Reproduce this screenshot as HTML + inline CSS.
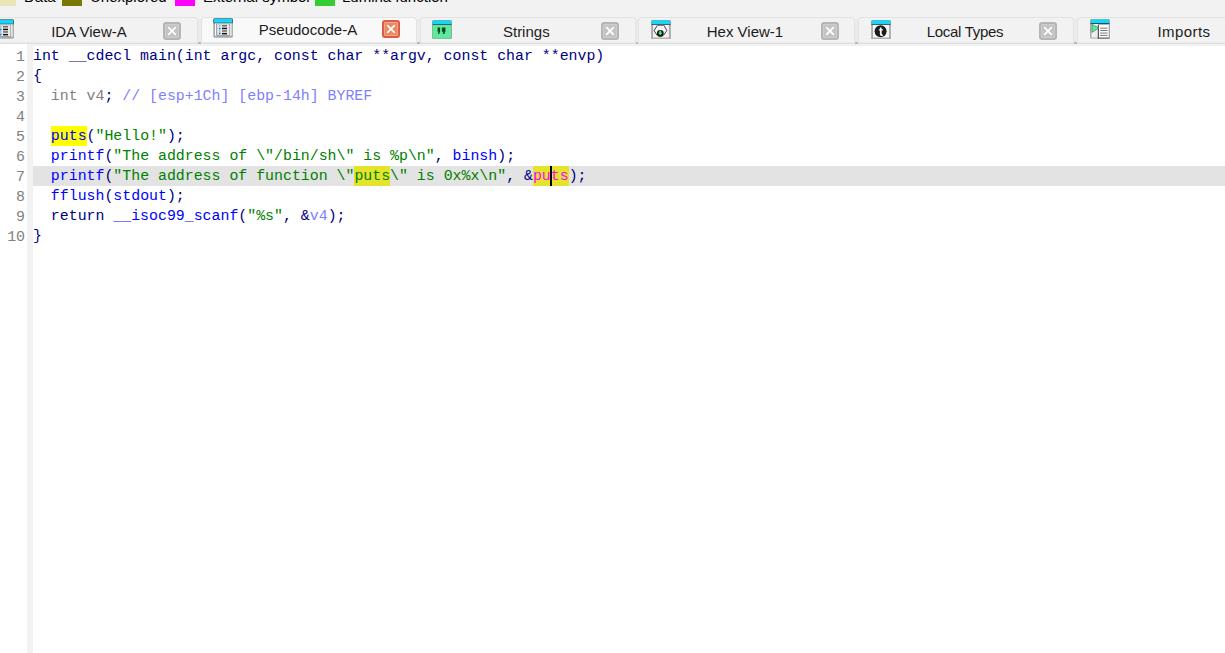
<!DOCTYPE html>
<html><head><meta charset="utf-8">
<style>
*{margin:0;padding:0;box-sizing:border-box}
html,body{width:1225px;height:653px;overflow:hidden;background:#fff}
body{position:relative;font-family:"Liberation Sans",sans-serif}
#top{position:absolute;left:0;top:0;width:1225px;height:44px;background:#f2f2f2}
.lg{position:absolute;top:0;height:6px}
.lt{position:absolute;top:-11px;font-size:15px;line-height:16px;color:#000;white-space:nowrap}
.tab{position:absolute;top:17px;height:25px;width:215px;background:#f2f2f2;border:1px solid #e3e3e3;border-bottom:none;border-radius:4px 4px 0 0}
.tab.act{background:#f9f9f9}.gap{position:absolute;top:19px;height:23px;background:#ebebeb}.blob{position:absolute;top:42px;height:2px;background:#b4b4b4;border-radius:1px 1px 0 0}
.tt{position:absolute;width:200px;text-align:center;font-size:15px;color:#1c1c1c;white-space:nowrap;line-height:16px}
.cl{position:absolute;width:18px;height:18px;border-radius:3px;background:#c3c3c3;border:2px solid #b5b5b5;box-shadow:inset 0 0 0 1px #cecece}
.cl.red{background:#eb8b5c;border-color:#e05a48;box-shadow:inset 0 0 0 1px #f2a78a}
.cl svg{position:absolute;left:2px;top:2px}
.ic{position:absolute}
#bl0{position:absolute;left:0;top:42px;width:1225px;height:1px;background:#e9e9e9}#bl1{position:absolute;left:0;top:43px;width:1225px;height:1px;background:#dfdfdf}
#bl2{position:absolute;left:27px;top:44px;width:1198px;height:2px;background:#f1f1f1}
#gut{position:absolute;left:27px;top:44px;width:6px;height:609px;background:#f2f2f2}
#code{position:absolute;left:0;top:46px;width:1225px;font-family:"Liberation Mono",monospace;font-size:14.88px}
.ln{position:absolute;left:0;height:20px;width:1225px;white-space:pre;line-height:20px}
.no{position:absolute;top:1px;right:1200px;color:#808080;text-align:right}
.tx{position:absolute;left:33px;color:#000080}
.b{color:#0000ff}.g{color:#008000}.gr{color:#808080}.c{color:#8080ff}.m{color:#ff00ff}
.hy,.hy2{display:inline-block;height:20px;line-height:20px;vertical-align:top}.hy{background:#ffff00}.hy2{background:#e4e42c}
#band{position:absolute;left:33px;top:166px;width:1192px;height:20px;background:#e3e3e3}
#cur{position:absolute;left:550px;top:166px;width:2px;height:20px;background:#000}
</style></head><body>
<div id="top">
  <div class="lg" style="left:0;width:16px;background:#e8e6b8"></div>
  <div class="lt" style="left:24px">Data</div>
  <div class="lg" style="left:62px;width:20px;background:#7a7800"></div>
  <div class="lt" style="left:90px">Unexplored</div>
  <div class="lg" style="left:175px;width:20px;background:#ff00ff"></div>
  <div class="lt" style="left:203px">External symbol</div>
  <div class="lg" style="left:315px;width:20px;background:#33cc33"></div>
  <div class="lt" style="left:342px">Lumina function</div>
</div>
<div id="bl0"></div><div id="bl1"></div><div id="bl2"></div>
<div class="gap" style="left:198px;width:3px"></div><div class="blob" style="left:198px;width:3px"></div>
<div class="gap" style="left:417px;width:3px"></div><div class="blob" style="left:417px;width:3px"></div>
<div class="gap" style="left:636px;width:2px"></div><div class="blob" style="left:636px;width:2px"></div>
<div class="gap" style="left:855px;width:3px"></div><div class="blob" style="left:855px;width:3px"></div>
<div class="gap" style="left:1074px;width:3px"></div><div class="blob" style="left:1074px;width:3px"></div>
<div class="tab" style="left:-17px;width:215px"></div>
<svg class="ic" style="left:-6px;top:19.2px" width="20" height="20" viewBox="0 0 20 20"><rect x="0.3" y="0.2" width="19.6" height="19.5" rx="1.5" fill="#a9a9a9"/><rect x="0.4" y="0.4" width="19.4" height="5" rx="1" fill="#24505c"/><rect x="1" y="0.9" width="18.2" height="3.8" fill="#12d6fb"/><rect x="2" y="5.3" width="16.5" height="12.4" fill="#fdfdfd"/><rect x="3.2" y="5.4" width="14" height="12.3" rx="0.5" fill="#8d8d8d"/><rect x="4.2" y="6.2" width="12.2" height="10.8" fill="#ebebeb"/><circle cx="6.7" cy="7.7" r="0.9" fill="#8ab8dc"/><circle cx="6.7" cy="10.4" r="1" fill="#2a7fc0"/><circle cx="6.7" cy="12.9" r="0.9" fill="#8ab8dc"/><circle cx="6.7" cy="15.6" r="1" fill="#2a7fc0"/><rect x="9" y="7" width="5" height="1.5" fill="#6a6a6a"/><rect x="9" y="9.7" width="5" height="1.5" fill="#111"/><rect x="9" y="12.2" width="5" height="1.5" fill="#6a6a6a"/><rect x="9" y="14.9" width="5" height="1.5" fill="#111"/></svg>
<div class="tt" style="left:-11px;top:24px;letter-spacing:0">IDA View-A</div>
<div class="cl" style="left:163px;top:22px"><svg width="10" height="10" viewBox="0 0 10 10"><path d="M1.2 1.2L8.8 8.8M8.8 1.2L1.2 8.8" stroke="#fff" stroke-width="1.7"/></svg></div>
<div class="tab act" style="left:201px;width:216px"></div>
<svg class="ic" style="left:213px;top:18px" width="20" height="20" viewBox="0 0 20 20"><rect x="0.3" y="0.2" width="19.6" height="19.5" rx="1.5" fill="#a9a9a9"/><rect x="0.4" y="0.4" width="19.4" height="5" rx="1" fill="#24505c"/><rect x="1" y="0.9" width="18.2" height="3.8" fill="#12d6fb"/><rect x="2" y="5.3" width="16.5" height="12.4" fill="#fdfdfd"/><rect x="3.2" y="5.4" width="14" height="12.3" rx="0.5" fill="#8d8d8d"/><rect x="4.2" y="6.2" width="12.2" height="10.8" fill="#ebebeb"/><circle cx="6.7" cy="7.7" r="0.9" fill="#8ab8dc"/><circle cx="6.7" cy="10.4" r="1" fill="#2a7fc0"/><circle cx="6.7" cy="12.9" r="0.9" fill="#8ab8dc"/><circle cx="6.7" cy="15.6" r="1" fill="#2a7fc0"/><rect x="9" y="7" width="5" height="1.5" fill="#6a6a6a"/><rect x="9" y="9.7" width="5" height="1.5" fill="#111"/><rect x="9" y="12.2" width="5" height="1.5" fill="#6a6a6a"/><rect x="9" y="14.9" width="5" height="1.5" fill="#111"/></svg>
<div class="tt" style="left:208px;top:22px;letter-spacing:0">Pseudocode-A</div>
<div class="cl red" style="left:382px;top:20px"><svg width="10" height="10" viewBox="0 0 10 10"><path d="M1.2 1.2L8.8 8.8M8.8 1.2L1.2 8.8" stroke="#fff" stroke-width="1.7"/></svg></div>
<div class="tab" style="left:420px;width:216px"></div>
<svg class="ic" style="left:432px;top:19.5px" width="20" height="19" viewBox="0 0 20 19"><rect x="0" y="0" width="20" height="19" rx="1.5" fill="#9a9a9a"/><rect x="0.6" y="0.6" width="18.8" height="3.8" rx="0.8" fill="#12d6fb"/><rect x="0.6" y="4.2" width="18.8" height="0.9" fill="#2d4f58"/><rect x="0.6" y="5.1" width="18.8" height="13.3" rx="0.8" fill="#5ee89c"/><path d="M5.6 7.4h2.5v4.2l-0.9 2.4h-1.3l0.6-2.2h-0.9z M9.9 7.4h3.5v4.2l-1.2 2.4h-1.5l0.7-2.2h-1.5z" fill="#0b4a20"/></svg>
<div class="tt" style="left:426.29999999999995px;top:24px;letter-spacing:0">Strings</div>
<div class="cl" style="left:601px;top:22px"><svg width="10" height="10" viewBox="0 0 10 10"><path d="M1.2 1.2L8.8 8.8M8.8 1.2L1.2 8.8" stroke="#fff" stroke-width="1.7"/></svg></div>
<div class="tab" style="left:638px;width:217px"></div>
<svg class="ic" style="left:651px;top:19.5px" width="20" height="19" viewBox="0 0 20 19"><rect x="0" y="0" width="20" height="19" rx="1.5" fill="#9a9a9a"/><rect x="0.6" y="0.6" width="18.8" height="3.8" rx="0.8" fill="#12d6fb"/><rect x="0.6" y="4.2" width="18.8" height="0.9" fill="#2d4f58"/><rect x="0.6" y="5.1" width="18.8" height="13.3" rx="0.8" fill="#f4f4f4"/><rect x="0.6" y="5.1" width="1.5" height="13.3" fill="#a9a9a9"/><rect x="17.9" y="5.1" width="1.5" height="13.3" fill="#a9a9a9"/><rect x="0.6" y="17.5" width="18.8" height="1.1" fill="#a9a9a9"/><path d="M6.3 5.5L3.1 10.5L6 15.3M13.1 5.5L15.8 10.5L12.6 15.3" fill="none" stroke="#161616" stroke-width="0.8"/><rect x="6.3" y="4.9" width="6.8" height="1" fill="#6e6e6e"/><circle cx="9.3" cy="13.4" r="3.4" fill="#121212"/><path d="M8.4 10.7h1.8v2h1.4l-2.3 2.6l-2.3-2.6h1.4z" fill="#4ef08c"/></svg>
<div class="tt" style="left:645px;top:24px;letter-spacing:0">Hex View-1</div>
<div class="cl" style="left:821px;top:22px"><svg width="10" height="10" viewBox="0 0 10 10"><path d="M1.2 1.2L8.8 8.8M8.8 1.2L1.2 8.8" stroke="#fff" stroke-width="1.7"/></svg></div>
<div class="tab" style="left:858px;width:216px"></div>
<svg class="ic" style="left:871px;top:19.5px" width="20" height="19" viewBox="0 0 20 19"><rect x="0" y="0" width="20" height="19" rx="1.5" fill="#9a9a9a"/><rect x="0.6" y="0.6" width="18.8" height="3.8" rx="0.8" fill="#12d6fb"/><rect x="0.6" y="4.2" width="18.8" height="0.9" fill="#2d4f58"/><rect x="0.6" y="5.1" width="18.8" height="13.3" rx="0.8" fill="#f6f6f6"/><rect x="0.6" y="5.1" width="1.4" height="13.3" fill="#ababab"/><rect x="18" y="5.1" width="1.4" height="13.3" fill="#ababab"/><rect x="0.6" y="17.6" width="18.8" height="1" fill="#a0a0a0"/><circle cx="9.6" cy="11.3" r="6" fill="#1c1c1c"/><path d="M8.9 7.6h1.7v1.6h1.3v1.4h-1.3v3.2c0 0.6 0.3 0.8 1.2 0.7v1.4c-1.9 0.3-2.9-0.2-2.9-1.8v-3.5h-1v-1.4h1z" fill="#fff"/></svg>
<div class="tt" style="left:865px;top:24px;letter-spacing:-0.3px">Local Types</div>
<div class="cl" style="left:1039px;top:22px"><svg width="10" height="10" viewBox="0 0 10 10"><path d="M1.2 1.2L8.8 8.8M8.8 1.2L1.2 8.8" stroke="#fff" stroke-width="1.7"/></svg></div>
<div class="tab" style="left:1077px;width:216px"></div>
<svg class="ic" style="left:1090px;top:19px" width="20" height="20" viewBox="0 0 20 20"><rect x="0" y="0" width="20" height="19.6" rx="1.5" fill="#a6a6a6"/><rect x="0.6" y="0.6" width="18.8" height="3.6" rx="0.8" fill="#12d6fb"/><rect x="0.6" y="4" width="18.8" height="1" fill="#2d4f58"/><rect x="1.4" y="5" width="6.9" height="13.6" fill="#efefef"/><rect x="8.3" y="5.8" width="10.4" height="13" fill="#ffffff"/><rect x="7.8" y="5.8" width="1" height="13.8" fill="#333"/><rect x="8.3" y="18.6" width="11.2" height="1" fill="#555"/><path d="M1.9 5.2L8.9 9.1L1.9 13.4Z" fill="#5ee89c" stroke="#2a5a3a" stroke-width="0.5"/><g fill="#6a6a6a"><rect x="10.1" y="8.7" width="7.5" height="0.9"/><rect x="10.1" y="11" width="7.5" height="0.9"/><rect x="10.1" y="13.6" width="7.5" height="0.9"/><rect x="10.1" y="15.9" width="7.5" height="0.9"/></g></svg>
<div class="tt" style="left:1084px;top:24px;letter-spacing:0.45px">Imports</div>
<div id="gut"></div>
<div id="band"></div>
<div id="code">
<div class="ln" style="top:0"><span class="no">1</span><span class="tx">int __cdecl main(int argc, const char **argv, const char **envp)</span></div>
<div class="ln" style="top:20px"><span class="no">2</span><span class="tx">{</span></div>
<div class="ln" style="top:40px"><span class="no">3</span><span class="tx">  <span class="gr">int v4</span>; <span class="c">// [esp+1Ch] [ebp-14h] BYREF</span></span></div>
<div class="ln" style="top:60px"><span class="no">4</span></div>
<div class="ln" style="top:80px"><span class="no">5</span><span class="tx">  <span class="b hy">puts</span>(<span class="g">"Hello!"</span>);</span></div>
<div class="ln" style="top:100px"><span class="no">6</span><span class="tx">  <span class="b">printf</span>(<span class="g">"The address of \"/bin/sh\" is %p\n"</span>, <span class="b">binsh</span>);</span></div>
<div class="ln" style="top:120px"><span class="no">7</span><span class="tx">  <span class="b">printf</span>(<span class="g">"The address of function \"<span class="hy2">puts</span>\" is 0x%x\n"</span>, &amp;<span class="m hy2">puts</span>);</span></div>
<div class="ln" style="top:140px"><span class="no">8</span><span class="tx">  <span class="b">fflush</span>(<span class="b">stdout</span>);</span></div>
<div class="ln" style="top:160px"><span class="no">9</span><span class="tx">  return <span class="b">__isoc99_scanf</span>(<span class="g">"%s"</span>, &amp;<span class="c">v4</span>);</span></div>
<div class="ln" style="top:180px"><span class="no">10</span><span class="tx">}</span></div>
</div>
<div id="cur"></div>
</body></html>
